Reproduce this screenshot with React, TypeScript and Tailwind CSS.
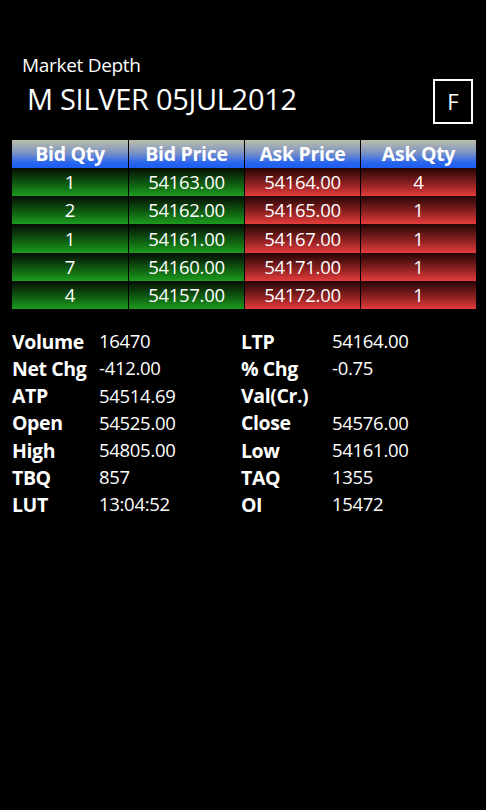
import React from 'react';

const bids = [
  { bq: '1', bp: '54163.00', ap: '54164.00', aq: '4' },
  { bq: '2', bp: '54162.00', ap: '54165.00', aq: '1' },
  { bq: '1', bp: '54161.00', ap: '54167.00', aq: '1' },
  { bq: '7', bp: '54160.00', ap: '54171.00', aq: '1' },
  { bq: '4', bp: '54157.00', ap: '54172.00', aq: '1' },
];

const stats: [string, string, string, string][] = [
  ['Volume', '16470', 'LTP', '54164.00'],
  ['Net Chg', '-412.00', '% Chg', '-0.75'],
  ['ATP', '54514.69', 'Val(Cr.)', ''],
  ['Open', '54525.00', 'Close', '54576.00'],
  ['High', '54805.00', 'Low', '54161.00'],
  ['TBQ', '857', 'TAQ', '1355'],
  ['LUT', '13:04:52', 'OI', '15472'],
];

const head = 'bg-[linear-gradient(to_bottom,#bcc0a8_0%,#7e93c4_45%,#2a66ee_80%,#1a5cf2_100%)]';
const green = 'bg-[linear-gradient(to_bottom,#040c04_0%,#0f5a10_55%,#1c9c1e_100%)]';
const red = 'bg-[linear-gradient(to_bottom,#240505_0%,#8a2020_55%,#e63c3c_100%)]';

export default function App() {
  return (
    <div className="w-[486px] h-[810px] bg-black text-white font-['Open_Sans',sans-serif] overflow-hidden">
      <div className="pt-[53px] pl-[22px] text-[19px] leading-[24px] tracking-[-0.3px]">Market Depth</div>
      <div className="flex items-start justify-between pr-[13px]">
        <div className="pl-[27px] pt-[4px] text-[29px] leading-[36px] tracking-[-0.3px]">M SILVER 05JUL2012</div>
        <div className="mt-[2px] w-[40px] h-[45px] border-2 border-white flex items-center justify-center text-[22px]">F</div>
      </div>

      <div className="mx-[12px] mt-[16px] w-[462px]">
        <div className="grid grid-cols-[116px_115px_115px_115px] gap-x-px font-bold text-[19.5px]">
          {['Bid Qty', 'Bid Price', 'Ask Price', 'Ask Qty'].map((h) => (
            <div key={h} className={`${head} h-[28px] flex items-center justify-center leading-none tracking-[-0.3px]`}>
              {h}
            </div>
          ))}
        </div>
        {bids.map((r, i) => (
          <div key={i} className="grid grid-cols-[116px_115px_115px_115px] gap-x-px text-[18.5px] h-[28.2px]">
            <div className={`${green} flex items-center justify-center`}>{r.bq}</div>
            <div className={`${green} flex items-center justify-center tracking-[-0.3px]`}>{r.bp}</div>
            <div className={`${red} flex items-center justify-center tracking-[-0.3px]`}>{r.ap}</div>
            <div className={`${red} flex items-center justify-center`}>{r.aq}</div>
          </div>
        ))}
      </div>

      <div className="mt-[19px] pl-[12px] text-[18.5px]">
        {stats.map(([l1, v1, l2, v2]) => (
          <div key={l1} className="grid grid-cols-[87px_142px_91px_1fr] h-[27.2px] items-center leading-none">
            <div className="font-bold text-[19.5px] tracking-[-0.4px]">{l1}</div>
            <div className="tracking-[-0.3px]">{v1}</div>
            <div className="font-bold text-[19.5px] tracking-[-0.4px]">{l2}</div>
            <div className="tracking-[-0.3px]">{v2}</div>
          </div>
        ))}
      </div>
    </div>
  );
}
